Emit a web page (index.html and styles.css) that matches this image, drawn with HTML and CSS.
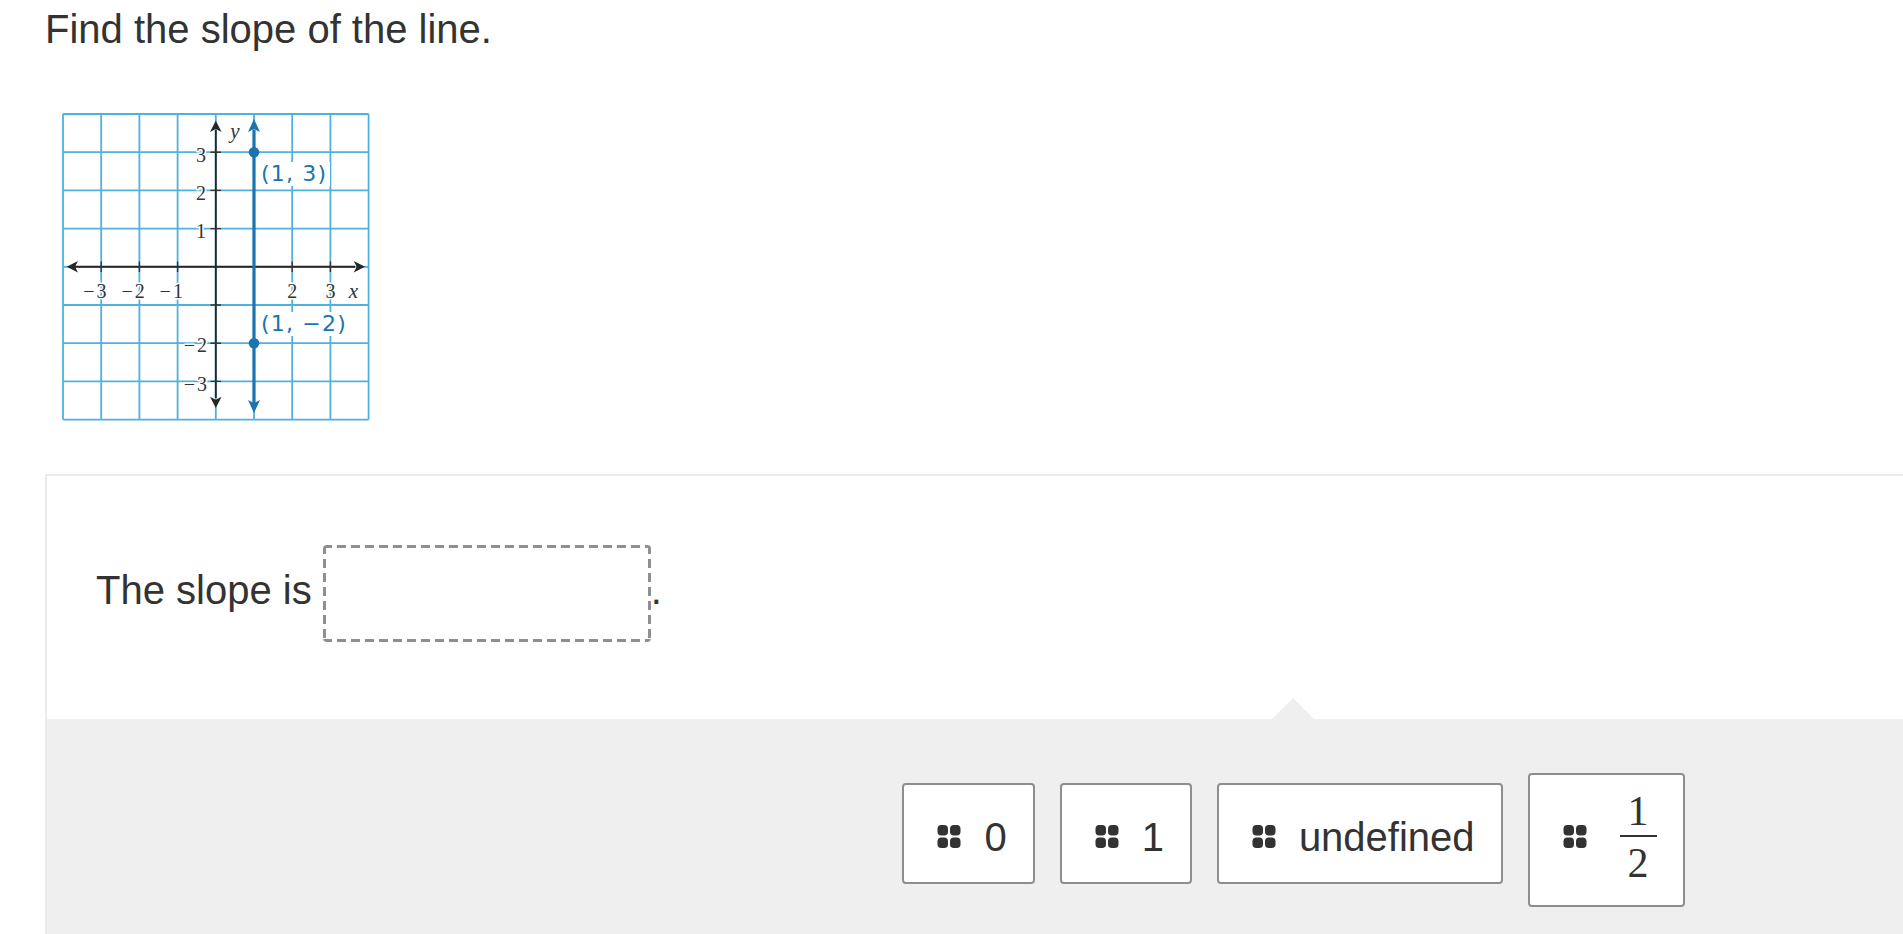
FILE: index.html
```html
<!DOCTYPE html>
<html lang="en">
<head>
<meta charset="utf-8">
<title>Find the slope of the line</title>
<link rel="stylesheet" href="styles.css">
</head>
<body>
<main class="page">
  <h1 class="prompt">Find the slope of the line.</h1>

  <figure class="graph">
    <svg width="320" height="320" viewBox="0 0 320 320" aria-label="Graph of the vertical line through (1, 3) and (1, -2)">
      <path class="grid" d="M8 8V313.6M46.2 8V313.6M84.4 8V313.6M122.6 8V313.6M160.8 8V313.6M199 8V313.6M237.2 8V313.6M275.4 8V313.6M313.6 8V313.6M8 8H313.6M8 46.2H313.6M8 84.4H313.6M8 122.6H313.6M8 160.8H313.6M8 199H313.6M8 237.2H313.6M8 275.4H313.6M8 313.6H313.6"/>

      <g class="tick-label">
        <text x="151" y="56" text-anchor="end">3</text>
        <text x="151" y="94" text-anchor="end">2</text>
        <text x="151" y="132" text-anchor="end">1</text>
        <text x="152" y="245.5" text-anchor="end">−<tspan dx="2">2</tspan></text>
        <text x="152" y="284.5" text-anchor="end">−<tspan dx="2">3</tspan></text>
        <text x="51.5" y="192" text-anchor="end">−<tspan dx="2">3</tspan></text>
        <text x="89.7" y="192" text-anchor="end">−<tspan dx="2">2</tspan></text>
        <text x="127.9" y="192" text-anchor="end">−<tspan dx="2">1</tspan></text>
        <text x="237.2" y="192" text-anchor="middle">2</text>
        <text x="275.4" y="192" text-anchor="middle">3</text>
        <text class="axis-name" x="298.5" y="192" text-anchor="middle">x</text>
        <text class="axis-name" x="180" y="32" text-anchor="middle">y</text>
      </g>

      <rect class="label-bg" x="205" y="56" width="70" height="24"/>
      <rect class="label-bg" x="205" y="206" width="94" height="24"/>
      <g class="point-label">
        <text x="206" y="75">(1, 3)</text>
        <text x="206" y="225">(1, −2)</text>
      </g>

      <path class="axis" d="M20 160.8H300M160.8 24V292"/>
      <path class="axis-head" d="M11.7 160.8L23 155L20 160.8L23 166.6ZM310 160.8L298.7 155L301.7 160.8L298.7 166.6ZM160.8 14.7L155 26L160.8 23L166.6 26ZM160.8 302L155 290.7L160.8 293.7L166.6 290.7Z"/>
      <path class="tick" d="M155.5 46.2H166M155.5 84.4H166M155.5 122.6H166M155.5 199H166M155.5 237.2H166M155.5 275.4H166M46.2 155.5V166M84.4 155.5V166M122.6 155.5V166M237.2 155.5V166M275.4 155.5V166"/>

      <path class="line" d="M199 24V297"/>
      <path class="line-head" d="M199 13L193 26L199 23L205 26ZM199 307L193 294L199 297L205 294Z"/>
      <circle class="point" cx="199" cy="46.2" r="5.3"/>
      <circle class="point" cx="199" cy="237.2" r="5.3"/>
    </svg>
  </figure>

  <section class="panel">
    <div class="question">The slope is <span class="drop-target" aria-label="answer blank"></span>.</div>

    <div class="tray">
      <div class="choices">
        <div class="choice">
          <svg class="grip" width="24" height="24" viewBox="0 0 24 24" aria-hidden="true"><rect x="0.5" y="0" width="10.5" height="10.5" rx="3.8"/><rect x="13" y="0" width="10.5" height="10.5" rx="3.8"/><rect x="0.5" y="12.5" width="10.5" height="10.5" rx="3.8"/><rect x="13" y="12.5" width="10.5" height="10.5" rx="3.8"/></svg>
          <span class="choice-text">0</span>
        </div>
        <div class="choice">
          <svg class="grip" width="24" height="24" viewBox="0 0 24 24" aria-hidden="true"><rect x="0.5" y="0" width="10.5" height="10.5" rx="3.8"/><rect x="13" y="0" width="10.5" height="10.5" rx="3.8"/><rect x="0.5" y="12.5" width="10.5" height="10.5" rx="3.8"/><rect x="13" y="12.5" width="10.5" height="10.5" rx="3.8"/></svg>
          <span class="choice-text">1</span>
        </div>
        <div class="choice">
          <svg class="grip" width="24" height="24" viewBox="0 0 24 24" aria-hidden="true"><rect x="0.5" y="0" width="10.5" height="10.5" rx="3.8"/><rect x="13" y="0" width="10.5" height="10.5" rx="3.8"/><rect x="0.5" y="12.5" width="10.5" height="10.5" rx="3.8"/><rect x="13" y="12.5" width="10.5" height="10.5" rx="3.8"/></svg>
          <span class="choice-text">undefined</span>
        </div>
        <div class="choice choice-frac">
          <svg class="grip" width="24" height="24" viewBox="0 0 24 24" aria-hidden="true"><rect x="0.5" y="0" width="10.5" height="10.5" rx="3.8"/><rect x="13" y="0" width="10.5" height="10.5" rx="3.8"/><rect x="0.5" y="12.5" width="10.5" height="10.5" rx="3.8"/><rect x="13" y="12.5" width="10.5" height="10.5" rx="3.8"/></svg>
          <span class="frac"><span class="num">1</span><span class="den">2</span></span>
        </div>
      </div>
    </div>
  </section>
</main>
</body>
</html>
```

FILE: styles.css
```css
html, body {
  margin: 0;
  padding: 0;
  background: #fff;
  overflow: hidden;
}

body {
  font-family: "Liberation Sans", Arial, sans-serif;
  color: #333;
}

.page {
  padding-left: 45px;
}

.prompt {
  margin: 6px 0 0;
  font-size: 40px;
  line-height: 46px;
  font-weight: 400;
  color: #333;
}

.graph {
  margin: 54px 0 0 10px;
  width: 320px;
  height: 320px;
}

.graph svg {
  display: block;
}

.grid {
  fill: none;
  stroke: #4fb1de;
  stroke-width: 1.8;
}

.tick-label text {
  font-family: "Liberation Serif", "Times New Roman", serif;
  font-size: 20px;
  fill: #333;
  stroke: #fff;
  stroke-width: 3px;
  stroke-linejoin: round;
  paint-order: stroke;
}

.tick-label .axis-name {
  font-style: italic;
  font-size: 21px;
}

.label-bg {
  fill: #fff;
}

.point-label text {
  font-family: "DejaVu Sans", "Liberation Sans", sans-serif;
  font-size: 22px;
  letter-spacing: 1.2px;
  fill: #1c74ae;
}

.axis {
  fill: none;
  stroke: #262626;
  stroke-width: 1.9;
}

.axis-head {
  fill: #262626;
}

.tick {
  fill: none;
  stroke: #333;
  stroke-width: 1.4;
}

.line {
  fill: none;
  stroke: #1c74ae;
  stroke-width: 3.2;
}

.line-head,
.point {
  fill: #1c74ae;
}

.panel {
  box-sizing: border-box;
  width: 2497px;
  margin-top: 48px;
  border: 2px solid #ebebeb;
  border-bottom: none;
}

.question {
  box-sizing: border-box;
  height: 243px;
  padding: 69px 0 0 49px;
  font-size: 40px;
  line-height: 46px;
  color: #333;
  white-space: nowrap;
}

.drop-target {
  display: inline-block;
  box-sizing: border-box;
  width: 328px;
  height: 97px;
  border-radius: 4px;
  vertical-align: middle;
  background:
    repeating-linear-gradient(90deg, #8f8f8f 0 9px, transparent 9px 14px) left top / 100% 3px no-repeat,
    repeating-linear-gradient(90deg, #8f8f8f 0 9px, transparent 9px 14px) left bottom / 100% 3px no-repeat,
    repeating-linear-gradient(180deg, #8f8f8f 0 9px, transparent 9px 14px) left top / 3px 100% no-repeat,
    repeating-linear-gradient(180deg, #8f8f8f 0 9px, transparent 9px 14px) right top / 3px 100% no-repeat;
}

.tray {
  position: relative;
  background: #efefef;
  padding-top: 41px;
  height: 300px;
}

.tray::before {
  content: "";
  position: absolute;
  top: -21px;
  left: 50%;
  margin-left: -21.5px;
  width: 0;
  height: 0;
  border-left: 21.5px solid transparent;
  border-right: 21.5px solid transparent;
  border-bottom: 21px solid #efefef;
}

.choices {
  display: flex;
  justify-content: center;
  align-items: center;
  gap: 25px;
}

.choice {
  box-sizing: border-box;
  display: flex;
  align-items: center;
  gap: 23px;
  height: 101px;
  padding: 6px 26px 0 33px;
  background: #fff;
  border: 2px solid #8e8e8e;
  border-radius: 4px;
  font-size: 40px;
  line-height: 46px;
  color: #333;
}

.grip {
  flex: none;
  display: block;
  fill: #333;
}

.choice-frac {
  height: 134px;
  margin-top: 13px;
  padding: 0 26px 6px 33px;
  gap: 33px;
}

.frac {
  display: inline-flex;
  flex-direction: column;
  align-items: stretch;
  font-family: "Liberation Serif", "Times New Roman", serif;
  font-size: 42px;
  line-height: 42px;
  text-align: center;
}

.num {
  padding: 0 8px 3px;
  border-bottom: 2px solid #333;
}

.den {
  padding-top: 5px;
}
```
